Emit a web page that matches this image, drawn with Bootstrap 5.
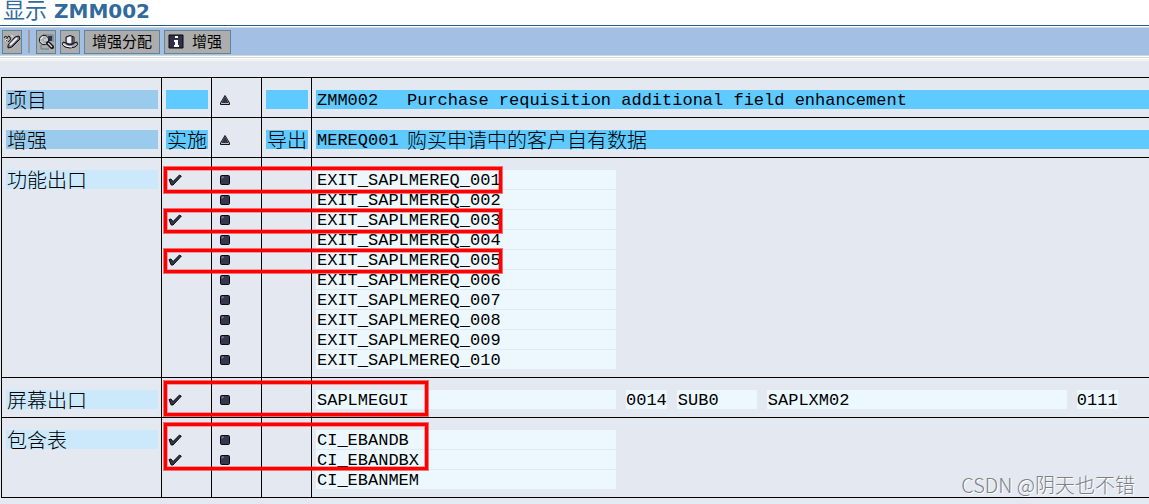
<!DOCTYPE html>
<html lang="zh-CN">
<head>
<meta charset="utf-8">
<meta name="viewport" content="width=device-width, initial-scale=1">
<title>显示 ZMM002</title>
<link href="https://cdn.jsdelivr.net/npm/bootstrap@5.3.0/dist/css/bootstrap.min.css" rel="stylesheet">
<style>
body{background:#e4e9f1;color:#000;overflow-x:hidden;font-family:"Liberation Sans","Noto Sans CJK SC",sans-serif}
.page-title{background:#fff;height:25px;padding-left:3px;color:#316a9c;font:700 20px/22px "DejaVu Sans","Noto Sans CJK SC",sans-serif;white-space:pre}
.page-title .cjk{font-size:22px;font-weight:400}
.tool-frame{border-top:1px solid #245a8c;border-bottom:2px solid #f2f3f3;background:#fff;padding:1px 0}
.exit-view{padding:16px 0 6px 1px}
.toolbar{height:29px;background:#a3bfe3;border-top:1px solid #cbd8dc;border-bottom:1px solid #cbd8dc;padding:0 2px;gap:4px}
.tool-line{border-bottom:1px solid #d3dad8;height:2px}
.tool{height:24px;min-width:20px;padding:0;border:1px solid #618595;border-radius:0;background:#adadad;color:#000;font-size:15px;line-height:22px;display:flex;align-items:center;justify-content:center}
.tool.wide{padding:0 7px}
.tool.wide.with-icon{padding:0 8px 0 3px;gap:8px}
.tool:hover{background:#bbb;border-color:#618595;color:#000}
.divider{width:2px;height:23px;background:#9a9da3;margin:0 2px}
.exits{width:100%;table-layout:fixed;border-collapse:separate;border-spacing:0;border-bottom:1px solid #000;font:17px/19px "Liberation Mono","Noto Sans CJK SC",monospace}
.exits .name-col{width:160px}
.exits .flag-col{width:50px}
.exits th,.exits td{padding:0 3px 0 4px;border-left:1px solid #000;vertical-align:top;font-weight:400;white-space:nowrap}
.exits tr:first-child>*{border-top:1px solid #000;padding-top:12px}
.exits tr:last-child>*{padding-bottom:7px}
.exits td:last-child{padding-right:0}
.cell{display:flex;height:20px;line-height:21px;padding-left:1px;border-bottom:1px solid #e4e9f1;background-clip:padding-box}
.cjk-text{font-family:"Noto Sans CJK SC",sans-serif;font-weight:300;font-size:20px;line-height:19px}
.head{background-color:#9acbec}
.key{background-color:#5ecaff}
.sub{background-color:#cce8fb}
.val{background-color:#ecf8fe}
tr:not(:last-child) .val{border-bottom-color:#dfe9f2}
.w-long{width:300px}.w-mid{width:80px}.w-code{min-width:40px;padding-left:0}
.fields{gap:10px}
.code{min-width:90px}
.icon{display:flex;align-items:center;height:20px;padding-left:2px}
.icon.state{padding-left:4px}
.anchor{position:relative}
.marker{position:absolute;left:2px;border:3px solid #f00;box-shadow:0 0 0 1px #ff000088,inset 0 0 0 1px #ff000055;pointer-events:none;z-index:1}
.line-mark{top:-1px;height:24px;width:338px}
tr:first-child .line-mark{top:9px;height:26px}
.screen-mark{top:3px;height:35px;width:264px}
.table-mark{top:5px;height:47px;width:264px}
.watermark{position:absolute;right:14px;bottom:7px;font:300 20px/24px "Noto Sans CJK SC",sans-serif;color:#7d8187;text-shadow:1px 1px 0 #fff}
</style>
</head>
<body>
<svg class="d-none" aria-hidden="true">
  <symbol id="check" viewBox="0 0 14 12"><path d="M1 5.5 3 5 5 7.6 11.5 1 13.3 2.2 5 11 3.2 11Z" fill="#353549" stroke="#0a0a12" stroke-linejoin="round"/></symbol>
  <symbol id="dot" viewBox="0 0 10 10"><rect x=".5" y=".5" width="9" height="9" rx="1.2" fill="#37374d" stroke="#08080f"/><path d="M2 3.5V2H4" fill="none" stroke="#c8c8d6" stroke-width=".6"/></symbol>
  <symbol id="tri" viewBox="0 0 10 10"><path d="M5 .5 9.5 8V9.5H.5V8Z" fill="#bbbcc8" stroke="#111" stroke-linejoin="round"/><path d="M5 1.2 8.6 8H1.4Z" fill="#33334a"/></symbol>
</svg>
<header>
  <h1 class="page-title mb-0"><span class="cjk">显示</span> ZMM002</h1>
  <div class="tool-frame">
    <div class="toolbar d-flex align-items-center" role="toolbar" aria-label="工具">
      <button class="btn tool" type="button" aria-label="更改"><svg width="18" height="18" viewBox="0 0 18 18"><path d="M1 5Q2 2 4 4M3 8Q5 1 7 4T5 9" fill="none" stroke="#111"/><path d="M4 6 2 8M8 3Q10 2 10 4" fill="none" stroke="#eee"/><path d="M5 12 12 4 16 3 17 6 9 14 5 15Z" fill="#77778d" stroke="#111"/><path d="M7 12 14 5" stroke="#eee" stroke-width="2"/><path d="M9 13 15 7" stroke="#44445c" stroke-width="1"/></svg></button>
      <span class="divider"></span>
      <button class="btn tool" type="button" aria-label="显示"><svg width="18" height="18" viewBox="0 0 18 18"><path d="M6 2H16V9M4 12V16H12M13 5H16" fill="none" stroke="#537e96"/><path d="M11 3H15V8H12Z" fill="#303047"/><circle cx="7" cy="7" r="4.7" fill="#c5c9ce" stroke="#111"/><path d="M5 5H9M4 7H7M6 9H9" stroke="#8b8f9b"/><path d="M4 6 6 4" stroke="#fff"/><path d="M11 10 15 14" stroke="#111" stroke-width="4" stroke-linecap="round"/><path d="M11 10 15 14" stroke="#ddd" stroke-width="1.5"/></svg></button>
      <button class="btn tool" type="button" aria-label="组件"><svg width="18" height="18" viewBox="0 0 18 18"><path d="M5 4Q9 1 13 4V10L16 9Q18 12 14 14Q9 16 4 14Q0 12 2 9L5 10Z" fill="#a5a8b8" stroke="#111"/><path d="M6 5V10Q9 11 10 10V4Q8 3 6 5" fill="#eef2f6"/><path d="M11 4V10L12 9V4" stroke="#56566e"/><path d="M5 10Q9 13 13 10" fill="none" stroke="#20202f" stroke-width="2"/><path d="M2 11Q5 14 11 14" fill="none" stroke="#fff"/></svg></button>
      <button class="btn tool wide" type="button">增强分配</button>
      <button class="btn tool wide with-icon" type="button"><svg width="16" height="15" viewBox="0 0 16 15"><path d="M1 1H15V14H1Z" fill="#303047" stroke="#08080f"/><path d="M7 2H10V4H7ZM6 6H10V11H11V13H6V11H7V8H6Z" fill="#fff"/></svg>增强</button>
    </div>
    <div class="tool-line"></div>
  </div>
</header>
<main class="exit-view position-relative">
  <table class="exits">
    <colgroup><col class="name-col"><col class="flag-col"><col class="flag-col"><col class="flag-col"><col></colgroup>
    <tbody><tr>
      <th scope="row"><div class="cell head cjk-text">项目</div></th>
      <td><div class="cell key"></div></td>
      <td><div class="icon state"><svg width="10" height="10"><use href="#tri"/></svg></div></td>
      <td><div class="cell key"></div></td>
      <td><div class="cell key"><span class="code">ZMM002</span><span>Purchase requisition additional field enhancement</span></div></td>
    </tr></tbody>
    <tbody><tr>
      <th scope="row"><div class="cell head cjk-text">增强</div></th>
      <td><div class="cell key cjk-text">实施</div></td>
      <td><div class="icon state"><svg width="10" height="10"><use href="#tri"/></svg></div></td>
      <td><div class="cell key cjk-text">导出</div></td>
      <td><div class="cell key"><span class="code">MEREQ001</span><span class="cjk-text">购买申请中的客户自有数据</span></div></td>
    </tr></tbody>
    <tbody>
      <tr><th scope="rowgroup" rowspan="10"><div class="cell sub cjk-text">功能出口</div></th>
        <td class="anchor"><div class="icon"><svg width="14" height="12"><use href="#check"/></svg></div><div class="marker line-mark"></div></td><td><div class="icon state"><svg width="10" height="10"><use href="#dot"/></svg></div></td><td></td><td><div class="cell val w-long">EXIT_SAPLMEREQ_001</div></td></tr>
      <tr><td></td><td><div class="icon state"><svg width="10" height="10"><use href="#dot"/></svg></div></td><td></td><td><div class="cell val w-long">EXIT_SAPLMEREQ_002</div></td></tr>
      <tr><td class="anchor"><div class="icon"><svg width="14" height="12"><use href="#check"/></svg></div><div class="marker line-mark"></div></td><td><div class="icon state"><svg width="10" height="10"><use href="#dot"/></svg></div></td><td></td><td><div class="cell val w-long">EXIT_SAPLMEREQ_003</div></td></tr>
      <tr><td></td><td><div class="icon state"><svg width="10" height="10"><use href="#dot"/></svg></div></td><td></td><td><div class="cell val w-long">EXIT_SAPLMEREQ_004</div></td></tr>
      <tr><td class="anchor"><div class="icon"><svg width="14" height="12"><use href="#check"/></svg></div><div class="marker line-mark"></div></td><td><div class="icon state"><svg width="10" height="10"><use href="#dot"/></svg></div></td><td></td><td><div class="cell val w-long">EXIT_SAPLMEREQ_005</div></td></tr>
      <tr><td></td><td><div class="icon state"><svg width="10" height="10"><use href="#dot"/></svg></div></td><td></td><td><div class="cell val w-long">EXIT_SAPLMEREQ_006</div></td></tr>
      <tr><td></td><td><div class="icon state"><svg width="10" height="10"><use href="#dot"/></svg></div></td><td></td><td><div class="cell val w-long">EXIT_SAPLMEREQ_007</div></td></tr>
      <tr><td></td><td><div class="icon state"><svg width="10" height="10"><use href="#dot"/></svg></div></td><td></td><td><div class="cell val w-long">EXIT_SAPLMEREQ_008</div></td></tr>
      <tr><td></td><td><div class="icon state"><svg width="10" height="10"><use href="#dot"/></svg></div></td><td></td><td><div class="cell val w-long">EXIT_SAPLMEREQ_009</div></td></tr>
      <tr><td></td><td><div class="icon state"><svg width="10" height="10"><use href="#dot"/></svg></div></td><td></td><td><div class="cell val w-long">EXIT_SAPLMEREQ_010</div></td></tr>
    </tbody>
    <tbody><tr>
      <th scope="row"><div class="cell sub cjk-text">屏幕出口</div></th>
      <td class="anchor"><div class="icon"><svg width="14" height="12"><use href="#check"/></svg></div><div class="marker screen-mark"></div></td>
      <td><div class="icon state"><svg width="10" height="10"><use href="#dot"/></svg></div></td><td></td>
      <td><div class="d-flex fields"><div class="cell val w-long">SAPLMEGUI</div><div class="cell val w-code">0014</div><div class="cell val w-mid">SUB0</div><div class="cell val w-long">SAPLXM02</div><div class="cell val w-code">0111</div></div></td>
    </tr></tbody>
    <tbody>
      <tr><th scope="rowgroup" rowspan="3"><div class="cell sub cjk-text">包含表</div></th>
        <td class="anchor"><div class="icon"><svg width="14" height="12"><use href="#check"/></svg></div><div class="marker table-mark"></div></td><td><div class="icon state"><svg width="10" height="10"><use href="#dot"/></svg></div></td><td></td><td><div class="cell val w-long">CI_EBANDB</div></td></tr>
      <tr><td><div class="icon"><svg width="14" height="12"><use href="#check"/></svg></div></td><td><div class="icon state"><svg width="10" height="10"><use href="#dot"/></svg></div></td><td></td><td><div class="cell val w-long">CI_EBANDBX</div></td></tr>
      <tr><td></td><td></td><td></td><td><div class="cell val w-long">CI_EBANMEM</div></td></tr>
    </tbody>
  </table>
  <div class="watermark">CSDN @阴天也不错</div>
</main>
<script src="https://cdn.jsdelivr.net/npm/bootstrap@5.3.0/dist/js/bootstrap.bundle.min.js"></script>
</body>
</html>
